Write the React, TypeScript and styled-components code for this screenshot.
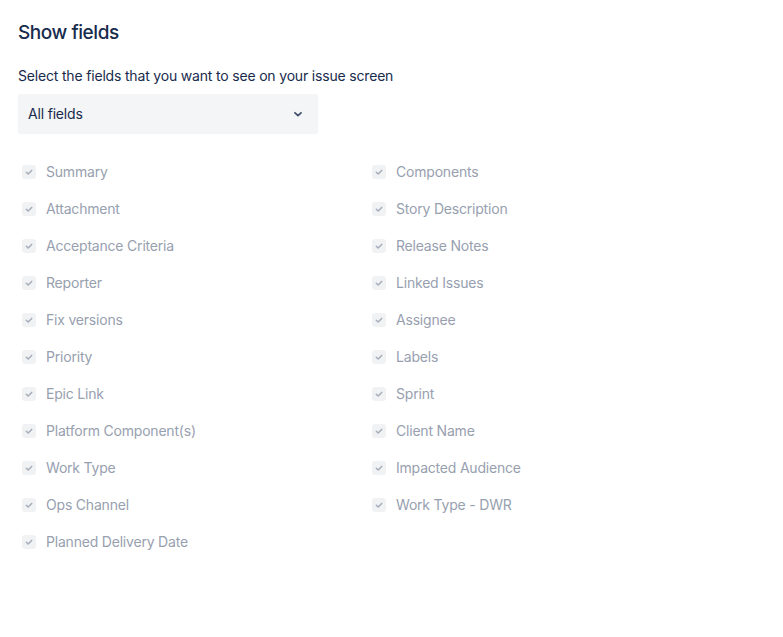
import React from "react";
import styled, { createGlobalStyle } from "styled-components";

const Global = createGlobalStyle`
  html, body { margin: 0; padding: 0; background: #fff; }
  body { font-family: Inter, "Noto Sans", "Liberation Sans", sans-serif; -webkit-font-smoothing: antialiased; }
`;

const Page = styled.div`
  padding: 20px 18px 0 18px;
  color: #172b4d;
`;

const Title = styled.h2`
  margin: 0;
  font-size: 19px;
  font-weight: 500;
  line-height: 26px;
  letter-spacing: -0.45px;
  color: #172b4d;
`;

const Subtitle = styled.p`
  margin: 20px 0 0 0;
  font-size: 14px;
  line-height: 20px;
  letter-spacing: -0.18px;
  color: #172b4d;
`;

const Select = styled.div`
  margin-top: 8px;
  width: 300px;
  height: 40px;
  box-sizing: border-box;
  background: #f4f5f7;
  border-radius: 3px;
  display: flex;
  align-items: center;
  justify-content: space-between;
  padding: 0 14px 1px 10px;
  font-size: 14px;
  letter-spacing: -0.18px;
  color: #172b4d;
`;

const Grid = styled.div`
  margin-top: 26px;
  display: grid;
  grid-template-columns: 350px 350px;
  grid-auto-flow: column;
  grid-template-rows: repeat(11, 37px);
`;

const Row = styled.div`
  display: flex;
  align-items: flex-start;
  padding-left: 4px;
  height: 37px;
  box-sizing: border-box;
  padding-top: 4px;
`;

const Box = styled.span`
  width: 14px;
  height: 14px;
  border-radius: 3px;
  background: #f1f2f4;
  display: flex;
  align-items: center;
  justify-content: center;
  flex: none;
  margin-top: 1px;
`;

const Label = styled.span`
  margin-left: 10px;
  font-size: 14px;
  line-height: 16px;
  letter-spacing: -0.2px;
  color: #97a0af;
`;

const left = [
  "Summary",
  "Attachment",
  "Acceptance Criteria",
  "Reporter",
  "Fix versions",
  "Priority",
  "Epic Link",
  "Platform Component(s)",
  "Work Type",
  "Ops Channel",
  "Planned Delivery Date",
];
const right = [
  "Components",
  "Story Description",
  "Release Notes",
  "Linked Issues",
  "Assignee",
  "Labels",
  "Sprint",
  "Client Name",
  "Impacted Audience",
  "Work Type - DWR",
];

const Check = () => (
  <svg width="10" height="10" viewBox="0 0 10 10">
    <path d="M2.3 5.2 L4.2 7 L7.7 3.4" fill="none" stroke="#a5adba" strokeWidth="1.5" strokeLinecap="round" strokeLinejoin="round" />
  </svg>
);

const Field = ({ name }: { name: string }) => (
  <Row>
    <Box>
      <Check />
    </Box>
    <Label>{name}</Label>
  </Row>
);

export default function App() {
  return (
    <Page>
      <Global />
      <Title>Show fields</Title>
      <Subtitle>Select the fields that you want to see on your issue screen</Subtitle>
      <Select>
        <span>All fields</span>
        <svg width="12" height="12" viewBox="0 0 12 12">
          <path d="M3 4.8 L6 7.6 L9 4.8" fill="none" stroke="#42526e" strokeWidth="1.8" strokeLinecap="round" strokeLinejoin="round" />
        </svg>
      </Select>
      <Grid>
        {left.map((n) => (
          <Field key={n} name={n} />
        ))}
        {right.map((n) => (
          <Field key={n} name={n} />
        ))}
      </Grid>
    </Page>
  );
}
